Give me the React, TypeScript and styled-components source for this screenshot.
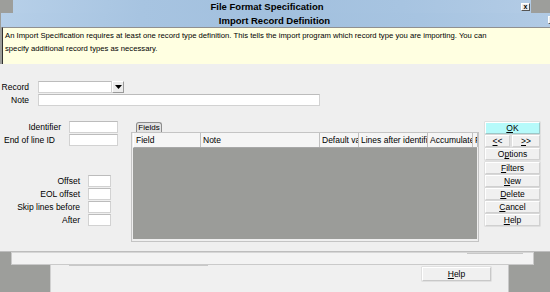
import React from "react";
import styled, { createGlobalStyle } from "styled-components";

const GlobalStyle = createGlobalStyle`
  * { box-sizing: border-box; }
  body {
    margin: 0;
    font-family: "Liberation Sans", Arial, sans-serif;
    color: #000;
  }
`;

const columns = [
  { name: "Field", width: 67 },
  { name: "Note", width: 119 },
  { name: "Default value", width: 39 },
  { name: "Lines after identifier", width: 69 },
  { name: "Accumulate", width: 45 },
  { name: "Format", width: 5 },
];

const actionButtons = [
  { key: "F", rest: "ilters" },
  { key: "N", rest: "ew" },
  { key: "D", rest: "elete" },
  { key: "C", rest: "ancel" },
  { key: "H", rest: "elp" },
];

const App = () => {
  return (
    <Desktop>
      <GlobalStyle />
      <OuterTitle>
        <TitleText>File Format Specification</TitleText>
        <CloseBox>x</CloseBox>
      </OuterTitle>

      <Dialog>
        <TitleBar>
          <TitleText>Import Record Definition</TitleText>
          <CloseBox>x</CloseBox>
        </TitleBar>
        <Hint>
          An Import Specification requires at least one record type definition. This tells the
          import program which record type you are importing. You can specify additional record
          types as necessary.
        </Hint>

        <Panel>
          <FormRow>
            <Label>Record</Label>
            <Combo>
              <ComboField />
              <ComboButton>
                <svg width="7" height="4" viewBox="0 0 7 4">
                  <path d="M0 0h7L3.5 4z" fill="#000" />
                </svg>
              </ComboButton>
            </Combo>
          </FormRow>
          <FormRow>
            <Label>Note</Label>
            <Input $w={282} />
          </FormRow>

          <Main>
            <LeftCol>
              <FieldGrid $label={61} $input={49}>
                <Label>Identifier</Label>
                <Input $w={49} />
                <Label $pad={6}>End of line ID</Label>
                <Input $w={49} />
              </FieldGrid>
              <OffsetGrid $label={80} $input={23}>
                <Label>Offset</Label>
                <Input $w={23} />
                <Label>EOL offset</Label>
                <Input $w={23} />
                <Label>Skip lines before</Label>
                <Input $w={23} />
                <Label>After</Label>
                <Input $w={23} />
              </OffsetGrid>
            </LeftCol>

            <FieldsArea>
              <Tab>Fields</Tab>
              <TableBox>
                <HeaderRow>
                  {columns.map((c) => (
                    <HeaderCell key={c.name} style={{ width: c.width }}>
                      {c.name}
                    </HeaderCell>
                  ))}
                </HeaderRow>
                <GridBody />
              </TableBox>
            </FieldsArea>

            <ButtonCol>
              <SideButton $ok>
                <u>O</u>K
              </SideButton>
              <NavRow>
                <SideButton $w={25}>
                  <u>&lt;</u>&lt;
                </SideButton>
                <SideButton $w={28}>
                  <u>&gt;</u>&gt;
                </SideButton>
              </NavRow>
              <SideButton>
                O<u>p</u>tions
              </SideButton>
              {actionButtons.map((b) => (
                <SideButton key={b.rest}>
                  <u>{b.key}</u>
                  {b.rest}
                </SideButton>
              ))}
            </ButtonCol>
          </Main>
        </Panel>
      </Dialog>

      <Strip>
        <StripRule />
      </Strip>
      <BottomWindow>
        <BottomRule />
        <HelpButton>
          <u>H</u>elp
        </HelpButton>
      </BottomWindow>
    </Desktop>
  );
};

export default App;

const Desktop = styled.div`
  width: 550px;
  height: 292px;
  overflow: hidden;
  background: #9d9e9b;
  display: flex;
  flex-direction: column;
  font-size: 8.5px;
`;

const barBg = `linear-gradient(90deg, #b6cfe8 0%, #a7c4e1 25%, #a2c0de 50%, #a7c4e1 75%, #b2cbe5 100%)`;

const OuterTitle = styled.div`
  margin-left: 13px;
  width: 518px;
  height: 13px;
  flex: none;
  background: ${barBg};
  display: flex;
  align-items: center;
  padding-right: 1px;
`;

const TitleBar = styled.div`
  height: 14px;
  width: 558px;
  margin-left: 1px;
  background: ${barBg};
  display: flex;
  align-items: center;
  padding-right: 2px;
`;

const TitleText = styled.div`
  flex: 1;
  text-align: center;
  font-weight: bold;
  font-size: 9.5px;
  line-height: 13px;
`;

const CloseBox = styled.div`
  width: 9px;
  height: 8px;
  background: #ececec;
  border: 1px solid #fff;
  border-right-color: #555;
  border-bottom-color: #555;
  font-size: 7px;
  font-weight: bold;
  line-height: 6px;
  text-align: center;
`;

const Dialog = styled.div`
  width: 558px;
  flex: none;
  display: flex;
  flex-direction: column;
`;

const Hint = styled.div`
  margin-left: 2px;
  height: 37px;
  background: #ffffe1;
  border-top: 1px solid #909090;
  border-left: 1px solid #303030;
  padding: 1px 60px 0 2px;
  font-size: 7.7px;
  line-height: 13px;
`;

const Panel = styled.div`
  height: 188px;
  background: #efefef;
  border-bottom: 1px solid #bdbdbd;
  padding-top: 17px;
  display: flex;
  flex-direction: column;
`;

const FormRow = styled.div`
  display: grid;
  grid-template-columns: 29px auto;
  column-gap: 9px;
  align-items: center;
  height: 12px;
  margin-bottom: 1px;
`;

const Label = styled.div<{ $pad?: number }>`
  text-align: right;
  white-space: nowrap;
  line-height: 12px;
  padding-right: ${(p) => p.$pad || 0}px;
`;

const Input = styled.div<{ $w: number }>`
  width: ${(p) => p.$w}px;
  height: 12px;
  background: #fff;
  border: 1px solid #d2d2d2;
  border-top-color: #bcbcbc;
`;

const Combo = styled.div`
  display: flex;
  width: 86px;
  height: 12px;
`;

const ComboField = styled.div`
  flex: 1;
  background: #fff;
  border: 1px solid #d2d2d2;
  border-top-color: #bcbcbc;
`;

const ComboButton = styled.div`
  width: 12px;
  background: #ececec;
  border: 1px solid #fff;
  border-right-color: #9a9a9a;
  border-bottom-color: #9a9a9a;
  display: flex;
  align-items: center;
  justify-content: center;
`;

const Main = styled.div`
  margin-top: 13px;
  display: flex;
  align-items: flex-start;
`;

const LeftCol = styled.div`
  width: 131px;
  padding-top: 1px;
  flex: none;
`;

const FieldGrid = styled.div<{ $label: number; $input: number }>`
  display: grid;
  grid-template-columns: ${(p) => p.$label}px ${(p) => p.$input}px;
  column-gap: 8px;
  row-gap: 1px;
  align-items: center;
`;

const OffsetGrid = styled(FieldGrid)`
  margin-top: 29px;
`;

const FieldsArea = styled.div`
  width: 348px;
  margin-top: 2px;
  flex: none;
`;

const Tab = styled.div`
  margin-left: 5px;
  width: 26px;
  height: 10px;
  border: 1px solid #8c8c8c;
  border-bottom: none;
  border-radius: 3px 3px 0 0;
  background: #e2e2e2;
  font-size: 8px;
  line-height: 9px;
  text-align: center;
`;

const TableBox = styled.div`
  height: 110px;
  border: 1px solid #c4c4c4;
  padding: 0 1px 2px 1px;
  display: flex;
  flex-direction: column;
`;

const HeaderRow = styled.div`
  height: 15px;
  display: flex;
  background: #f5f5f5;
  border-bottom: 1px solid #a8a8a8;
  border-left: 1px solid #fff;
`;

const HeaderCell = styled.div`
  flex: none;
  overflow: hidden;
  white-space: nowrap;
  padding-left: 2px;
  line-height: 14px;
  border-right: 1px solid #c0c0c0;
`;

const GridBody = styled.div`
  flex: 1;
  background: #9b9c99;
`;

const ButtonCol = styled.div`
  margin-left: 6px;
  margin-top: 2px;
  width: 55px;
  display: flex;
  flex-direction: column;
  gap: 1.2px;
`;

const NavRow = styled.div`
  display: flex;
  justify-content: space-between;
`;

const SideButton = styled.div<{ $ok?: boolean; $w?: number }>`
  width: ${(p) => (p.$w ? `${p.$w}px` : "100%")};
  height: 12px;
  background: ${(p) => (p.$ok ? "#b6fafa" : "#f0f0f0")};
  border: 1px solid ${(p) => (p.$ok ? "#9cc8c8" : "#d0d0d0")};
  border-top-color: #fff;
  border-left-color: #fff;
  box-shadow: 0 0 0 0.5px #cfcfcf;
  text-align: center;
  line-height: 10px;
  font-size: 8.5px;
  u {
    text-decoration-thickness: 1px;
  }
`;

const Strip = styled.div`
  margin-left: 11px;
  width: 523px;
  height: 13px;
  flex: none;
  background: #f3f3f3;
  border: 1px solid #cacaca;
  border-top-color: #d6d6d6;
  padding-left: 455px;
`;

const StripRule = styled.div`
  width: 56px;
  height: 1px;
  background: #c8c8c8;
`;

const BottomWindow = styled.div`
  margin-left: 50px;
  width: 459px;
  flex: 1;
  background: #f0f0f0;
  border-left: 1px solid #d0d0d0;
  border-right: 1px solid #c8c8c8;
  display: flex;
  flex-direction: column;
`;

const BottomRule = styled.div`
  margin-left: 18px;
  width: 139px;
  height: 1px;
  background: #c8c8c8;
`;

const HelpButton = styled.div`
  margin: 1px 0 0 371px;
  width: 69px;
  height: 14px;
  background: #f0f0f0;
  border: 1px solid #c8c8c8;
  border-top-color: #fff;
  border-left-color: #fff;
  box-shadow: 0 0 0 0.5px #d0d0d0;
  text-align: center;
  line-height: 12px;
  font-size: 8.5px;
`;
